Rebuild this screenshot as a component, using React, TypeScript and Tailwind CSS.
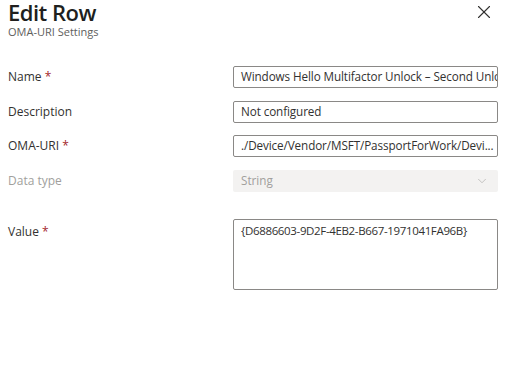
import { ChevronDown, X } from 'lucide-react'

type FieldRowProps = {
  label: string
  required?: boolean
  disabled?: boolean
  children: React.ReactNode
}

function FieldRow({ label, required = false, disabled = false, children }: FieldRowProps) {
  return (
    <div className="flex h-[22px] items-center">
      <div className={`w-[225px] text-[12px] ${disabled ? 'text-[#a19f9d]' : 'text-[#323130]'}`}>
        {label}
        {required && <span className="text-[#a4262c]"> *</span>}
      </div>
      <div className="w-[265px]">{children}</div>
    </div>
  )
}

function TextBox({ value }: { value: string }) {
  return (
    <div className="flex h-[22px] items-center overflow-hidden whitespace-nowrap rounded-[2px] border border-[#8a8886] bg-white px-[7px] text-[11.7px] tracking-[-0.1px] text-[#323130]">
      {value}
    </div>
  )
}

export default function App() {
  return (
    <div className="h-[391px] w-[505px] bg-white pl-[8px] font-['Open_Sans',sans-serif] text-[#323130]">
      <div className="flex items-start justify-between pr-[10px]">
        <div>
          <h1 className="text-[22px] font-semibold leading-[24px] tracking-[-0.5px] text-[#201f1e]">Edit Row</h1>
          <div className="mt-[1px] text-[11px] leading-[14px] text-[#605e5c]">OMA-URI Settings</div>
        </div>
        <X className="mt-[1px] h-[22px] w-[22px] text-[#323130]" strokeWidth={1.2} />
      </div>

      <div className="mt-[27px] flex flex-col gap-[12.5px]">
        <FieldRow label="Name" required>
          <TextBox value="Windows Hello Multifactor Unlock – Second Unlock Factor" />
        </FieldRow>
        <FieldRow label="Description">
          <TextBox value="Not configured" />
        </FieldRow>
        <FieldRow label="OMA-URI" required>
          <TextBox value="./Device/Vendor/MSFT/PassportForWork/Devi..." />
        </FieldRow>
        <FieldRow label="Data type" disabled>
          <div className="flex h-[22px] items-center justify-between rounded-[2px] bg-[#f3f2f1] pl-[8px] pr-[6px] text-[11.7px] text-[#a19f9d]">
            <span>String</span>
            <ChevronDown className="h-[14px] w-[20px] text-[#a19f9d]" strokeWidth={1} />
          </div>
        </FieldRow>
      </div>

      <div className="mt-[27px] flex items-start">
        <div className="w-[225px] pt-[4px] text-[12px] text-[#323130]">
          Value<span className="text-[#a4262c]"> *</span>
        </div>
        <div className="h-[71px] w-[265px] overflow-hidden whitespace-nowrap rounded-[2px] border border-[#8a8886] px-[7px] pt-[2px] text-[11.5px] tracking-[-0.35px] text-[#323130]">
          {'{D6886603-9D2F-4EB2-B667-1971041FA96B}'}
        </div>
      </div>
    </div>
  )
}
